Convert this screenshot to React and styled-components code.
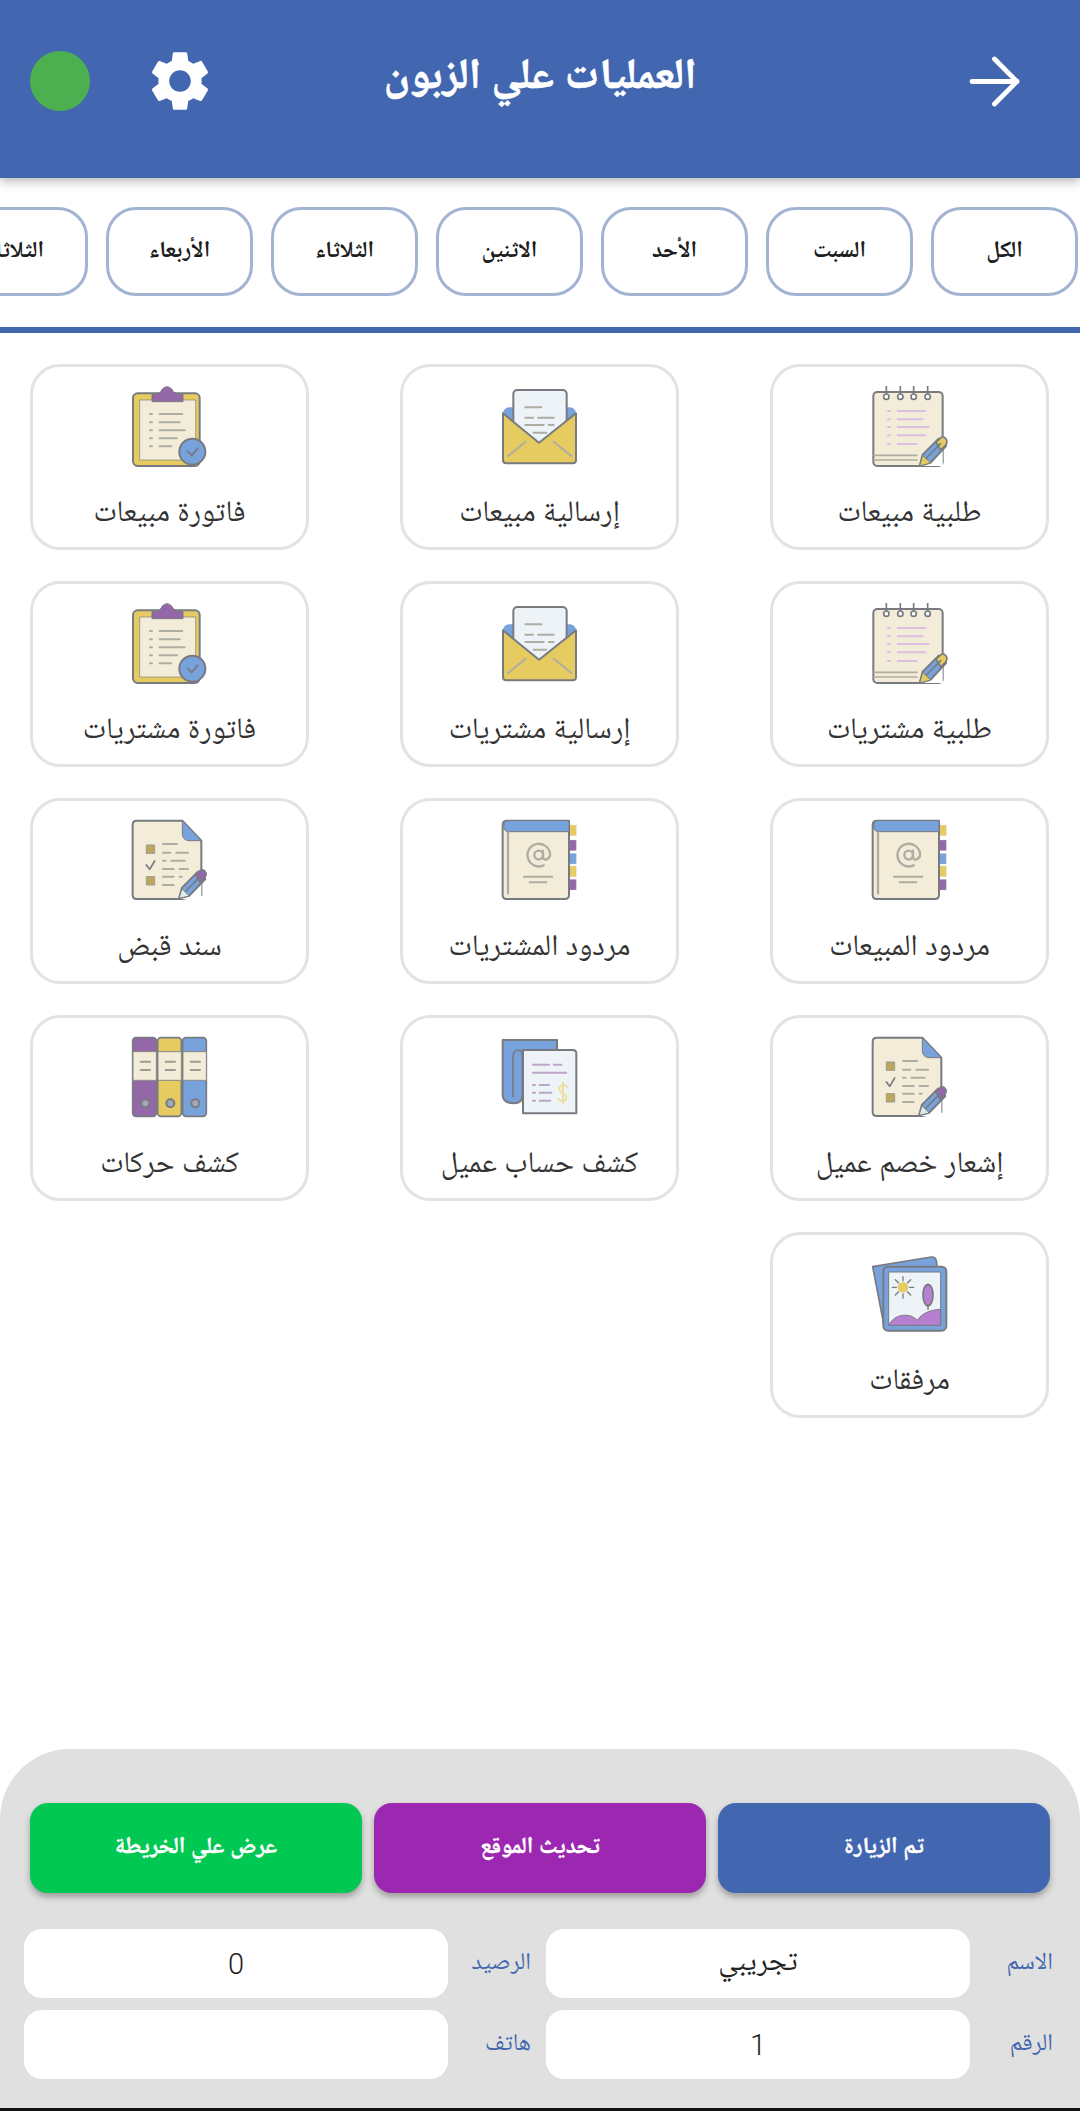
import React from 'react';
import styled, { createGlobalStyle } from 'styled-components';
import { ArrowRight } from 'lucide-react';
import { MdSettings } from 'react-icons/md';

const BLUE = '#4267B0';
const STROKE = '#777B80';
const TAN = '#F3ECD9';
const YELLOW = '#E6CB60';
const PURPLE = '#9468A8';
const SKY = '#78A2DC';
const PAPER = '#EDF3F6';
const GREY = '#AEADA3';
const LILAC = '#DCBFE2';
const FONT = 'Roboto, "Noto Naskh Arabic", "Noto Sans Arabic", "DejaVu Sans", sans-serif';

const Global = createGlobalStyle`
  html, body { margin: 0; padding: 0; background: #fff; }
  body { font-family: ${FONT}; }
  * { box-sizing: border-box; }
`;

const Page = styled.div`
  width: 1080px;
  height: 2111px;
  display: flex;
  flex-direction: column;
  overflow: hidden;
  background: #fff;
`;

const Header = styled.header`
  height: 178px;
  flex: none;
  background: ${BLUE};
  box-shadow: 0 3px 10px rgba(0, 0, 0, 0.3);
  display: grid;
  grid-template-columns: 1fr auto 1fr;
  align-items: center;
  padding: 0 30px 16px;
  position: relative;
  z-index: 1;
`;

const HeaderLeft = styled.div`
  display: flex;
  align-items: center;
  gap: 54px;
  color: #fff;
`;

const StatusDot = styled.span`
  width: 60px;
  height: 60px;
  border-radius: 50%;
  background: #4caf50;
`;

const Title = styled.h1`
  margin: 0 0 6px;
  direction: rtl;
  color: #fff;
  font-size: 43px;
  font-weight: 700;
  white-space: nowrap;
  -webkit-text-stroke: 0.6px #fff;
`;

const HeaderRight = styled.div`
  display: flex;
  justify-content: flex-end;
  color: #fff;
  svg { display: block; margin-right: 17px; }
`;

const ChipBar = styled.nav`
  flex: none;
  direction: rtl;
  display: flex;
  gap: 18px;
  overflow: hidden;
  padding: 29px 2px 31px 0;
  border-bottom: 6px solid ${BLUE};
`;

const Chip = styled.button`
  flex: none;
  width: 147px;
  height: 89px;
  border: 3px solid #a3b4d3;
  border-radius: 30px;
  background: #fff;
  color: #1d1d1d;
  font: 700 23px ${FONT};
  padding: 0;
`;

const Grid = styled.main`
  direction: rtl;
  display: grid;
  grid-template-columns: repeat(3, 279px);
  grid-auto-rows: 186px;
  gap: 31px 91px;
  padding: 31px 31px 0 30px;
`;

const Card = styled.div`
  border: 3px solid #e3e3e3;
  border-radius: 30px;
  display: flex;
  flex-direction: column;
  align-items: center;
  padding-top: 19px;
  color: #333;
`;

const IconSvg = styled.svg`
  width: 75px;
  height: 81px;
  flex: none;
  filter: blur(0.7px);
  overflow: visible;
`;

const CardLabel = styled.span`
  margin-top: 24px;
  font-size: 30px;
  line-height: 40px;
  white-space: nowrap;
`;

const Panel = styled.footer`
  margin-top: auto;
  height: 362px;
  flex: none;
  background: #e0e0e0;
  border-radius: 70px 70px 0 0;
  border-bottom: 3px solid #111;
  padding: 54px 27px 0 24px;
  direction: rtl;
`;

const Buttons = styled.div`
  display: grid;
  grid-template-columns: repeat(3, 332px);
  gap: 12px;
  padding: 0 3px 0 6px;
  margin-bottom: 36px;
`;

const ActionButton = styled.button`
  height: 90px;
  border: 0;
  border-radius: 18px;
  background: ${(p) => p.$color};
  color: #fff;
  font: 700 23px ${FONT};
  -webkit-text-stroke: 0.3px #fff;
  box-shadow: 0 4px 6px rgba(0, 0, 0, 0.3);
`;

const Fields = styled.div`
  display: grid;
  grid-template-columns: repeat(2, 507px);
  gap: 12px 15px;
`;

const Field = styled.label`
  display: grid;
  grid-template-columns: 83px 424px;
  align-items: center;
`;

const FieldLabel = styled.span`
  color: ${BLUE};
  font-size: 24px;
`;

const FieldInput = styled.input`
  height: 69px;
  width: 100%;
  border: 0;
  border-radius: 18px;
  background: #fff;
  color: #222;
  text-align: center;
  font: 300 29px ${FONT};
  outline: none;
`;

const Ln = ({ c = GREY, w = 6, d }) => <path d={d} fill="none" stroke={c} strokeWidth={w} strokeLinecap="round" />;

const Base = ({ children }) => (
  <IconSvg viewBox="0 0 225 243" strokeLinejoin="round">{children}</IconSvg>
);

const Notebook = () => (
  <Base>
    <rect x="4" y="18" width="208" height="222" rx="12" fill={TAN} stroke={STROKE} strokeWidth="6" />
    <Ln d="M6 208H135M6 222H135" c={GREY} w="5" />
    <path d="M212 150V240H140Z" fill="#fff" />
    {[43, 85, 125, 167].map((x) => (
      <g key={x}>
        <path d={`M${x} 0V24`} stroke={STROKE} strokeWidth="5" />
        <circle cx={x} cy="32" r="8" fill="#fff" stroke={STROKE} strokeWidth="5" />
      </g>
    ))}
    <Ln c={LILAC} d="M48 75H54M77 75H160M48 100H54M77 100H152M48 123H54M77 123H170M48 148H54M77 148H160M48 174H54M77 174H134" />
    <path d="M143 240L152 206L200 158L222 180L176 230Z" fill={SKY} stroke={STROKE} strokeWidth="6" />
    <path d="M192 168L208 154Q218 150 224 162Q227 170 220 178L206 192Z" fill={YELLOW} stroke={STROKE} strokeWidth="5" />
    <path d="M143 240L152 208L176 231Z" fill={YELLOW} stroke={STROKE} strokeWidth="3" />
    <Ln d="M163 216L206 173" c={STROKE} w="5" />
  </Base>
);

const Envelope = () => (
  <Base>
    <path d="M3 85Q3 67 20 64H205Q222 67 222 85V120H3Z" fill={SKY} />
    <rect x="34" y="12" width="160" height="180" rx="12" fill={PAPER} stroke={STROKE} strokeWidth="6" />
    <Ln d="M70 64H118M70 95H93M108 95H155M70 117H125M140 117H155M95 140H133" />
    <path d="M3 82L111 170L222 82V222Q222 232 212 232H13Q3 232 3 222Z" fill={YELLOW} stroke={STROKE} strokeWidth="6" />
    <Ln c={GREY} w="6" d="M18 210L71 167M155 167L208 210" />
  </Base>
);

const Clipboard = () => (
  <Base>
    <rect x="3" y="22" width="200" height="218" rx="14" fill={YELLOW} stroke={STROKE} strokeWidth="6" />
    <rect x="23" y="42" width="168" height="180" fill={TAN} stroke={STROKE} strokeWidth="2" />
    <path d="M60 26Q88 24 90 10Q105 -6 120 10Q122 24 153 26V47H60Z" fill={PURPLE} stroke={STROKE} strokeWidth="3" />
    <Ln d="M54 84H60M83 84H151M54 109H60M83 109H143M54 133H60M83 133H158M54 157H60M83 157H135M54 181H60M83 181H118" />
    <circle cx="181" cy="197" r="39" fill={SKY} stroke={STROKE} strokeWidth="6" />
    <Ln c={STROKE} w="6" d="M167 196L179 208L197 187" />
  </Base>
);

const AddressBook = () => (
  <Base>
    {[[15, YELLOW], [60, PURPLE], [100, SKY], [138, YELLOW], [178, PURPLE]].map(([y, c]) => (
      <rect key={y} x="198" y={y} width="25" height="32" fill={c} stroke="#d8d8d8" strokeWidth="1" />
    ))}
    <path d="M15 2H201V225Q201 237 189 237H14Q2 237 2 225V15Q2 2 15 2Z" fill={TAN} stroke={STROKE} strokeWidth="6" />
    <path d="M15 2H201V35H22Q5 35 5 20Q6 2 15 2Z" fill={SKY} stroke={STROKE} strokeWidth="3" />
    <Ln d="M18 38V220" w="7" />
    <circle cx="110" cy="105" r="13" fill="none" stroke={GREY} strokeWidth="7" />
    <path d="M123 92V110Q124 122 134 118Q146 112 144 100A34 34 0 1 0 125 136" fill="none" stroke={GREY} strokeWidth="7" strokeLinecap="round" />
    <Ln d="M66 170H151M83 187H133" />
  </Base>
);

const Receipt = () => (
  <Base>
    <path d="M14 2H151L208 62V225L150 237H14Q2 237 2 225V14Q2 2 14 2Z" fill={TAN} stroke={STROKE} strokeWidth="6" />
    <path d="M151 2L208 62H170Q151 60 151 40Z" fill={SKY} stroke={STROKE} strokeWidth="3" />
    <rect x="43" y="75" width="25" height="25" fill="#BFA75A" stroke="#999" strokeWidth="3" />
    <rect x="43" y="170" width="25" height="25" fill="#BFA75A" stroke="#999" strokeWidth="3" />
    <Ln c={STROKE} w="5" d="M43 135L53 148L68 123" />
    <Ln d="M93 72H135M93 98H115M133 98H168M93 122H101M118 122H158M93 147H125M143 147H168M93 170H125M143 170H149M93 195H125" />
    <path d="M208 150V237H140Z" fill="#fff" />
    <path d="M141 235L150 203L198 155L220 177L172 227Z" fill={SKY} stroke={STROKE} strokeWidth="6" />
    <path d="M190 163L206 150Q216 146 222 158Q225 166 218 174L204 188Z" fill={PURPLE} stroke={STROKE} strokeWidth="4" />
    <path d="M141 235L150 206L172 228Z" fill="#DDEEE8" stroke={STROKE} strokeWidth="3" />
    <Ln c={STROKE} w="5" d="M162 213L204 170" />
  </Base>
);

const Binders = () => (
  <Base>
    {[[0, PURPLE], [75, YELLOW], [150, SKY]].map(([x, c]) => (
      <g key={x}>
        <rect x={x + 2} y="2" width="71" height="236" rx="10" fill={c} stroke={STROKE} strokeWidth="5" />
        <rect x={x + 3} y="44" width="70" height="86" fill={TAN} stroke="#8a8a86" strokeWidth="3" />
        <Ln d={`M${x + 26} 74H${x + 54}M${x + 26} 99H${x + 54}`} c="#9c9c94" />
        <circle cx={x + 40} cy="199" r="12" fill="#A2A8B8" stroke={STROKE} strokeWidth="6" />
      </g>
    ))}
  </Base>
);

const Statement = () => (
  <Base>
    <path d="M2 9H165V45H62V172Q62 199 35 199Q2 199 2 172Z" fill={SKY} stroke={STROKE} strokeWidth="6" />
    <path d="M62 39H160V190H62Z" fill={SKY} />
    <path d="M33 180V60Q35 39 48 39Q62 39 62 60V199" fill="none" stroke={STROKE} strokeWidth="5" />
    <path d="M63 39H212Q223 39 223 50V229H63Z" fill={PAPER} stroke={STROKE} strokeWidth="6" />
    <Ln c="#BDA6C9" d="M93 83H141M155 83H178M93 107H193M93 144H99M113 144H141M93 167H99M113 167H148M93 191H99M113 191H145" />
    <path d="M196 150Q188 142 180 145Q168 150 174 162Q180 170 188 172Q198 180 190 190Q180 196 168 186M183 135V200" fill="none" stroke="#EBDD92" strokeWidth="5" strokeLinecap="round" />
  </Base>
);

const Picture = () => (
  <Base>
    <path d="M2 38L178 9Q190 8 193 20L198 60H40V215H36Z" fill={SKY} stroke={STROKE} strokeWidth="5" />
    <rect x="34" y="38" width="189" height="192" rx="14" fill={SKY} stroke={STROKE} strokeWidth="6" />
    <rect x="50" y="54" width="156" height="160" fill={PAPER} stroke={STROKE} strokeWidth="3" />
    <Ln c={STROKE} w="4" d="M93 68V132M61 100H125M70 77L116 123M116 77L70 123" />
    <circle cx="93" cy="100" r="17" fill={YELLOW} stroke={PAPER} strokeWidth="3" />
    <path d="M50 214C62 190 85 180 112 185C125 187 135 200 137 197C150 180 170 168 206 166V214Z" fill="#B77FD0" stroke={STROKE} strokeWidth="3" />
    <path d="M168 168V140" stroke={STROKE} strokeWidth="4" />
    <ellipse cx="168" cy="123" rx="15" ry="32" fill="#B77FD0" stroke={STROKE} strokeWidth="5" />
  </Base>
);

const days = ['الكل', 'السبت', 'الأحد', 'الاثنين', 'الثلاثاء', 'الأربعاء', 'الثلاثاء'];

const items = [
  ['طلبية مبيعات', Notebook],
  ['إرسالية مبيعات', Envelope],
  ['فاتورة مبيعات', Clipboard],
  ['طلبية مشتريات', Notebook],
  ['إرسالية مشتريات', Envelope],
  ['فاتورة مشتريات', Clipboard],
  ['مردود المبيعات', AddressBook],
  ['مردود المشتريات', AddressBook],
  ['سند قبض', Receipt],
  ['إشعار خصم عميل', Receipt],
  ['كشف حساب عميل', Statement],
  ['كشف حركات', Binders],
  ['مرفقات', Picture],
];

const fields = [
  ['الاسم', 'تجريبي'],
  ['الرصيد', '0'],
  ['الرقم', '1'],
  ['هاتف', ''],
];

export default function App() {
  return (
    <Page>
      <Global />
      <Header>
        <HeaderLeft>
          <StatusDot />
          <MdSettings size={72} />
        </HeaderLeft>
        <Title>العمليات علي الزبون</Title>
        <HeaderRight>
          <ArrowRight size={77} strokeWidth={1.5} />
        </HeaderRight>
      </Header>
      <ChipBar>
        {days.map((d, i) => (
          <Chip key={i}>{d}</Chip>
        ))}
      </ChipBar>
      <Grid>
        {items.map(([label, Icon]) => (
          <Card key={label}>
            <Icon />
            <CardLabel>{label}</CardLabel>
          </Card>
        ))}
      </Grid>
      <Panel>
        <Buttons>
          <ActionButton $color={BLUE}>تم الزيارة</ActionButton>
          <ActionButton $color="#9C27B0">تحديث الموقع</ActionButton>
          <ActionButton $color="#00C853">عرض علي الخريطة</ActionButton>
        </Buttons>
        <Fields>
          {fields.map(([label, value]) => (
            <Field key={label}>
              <FieldLabel>{label}</FieldLabel>
              <FieldInput readOnly value={value} />
            </Field>
          ))}
        </Fields>
      </Panel>
    </Page>
  );
}
